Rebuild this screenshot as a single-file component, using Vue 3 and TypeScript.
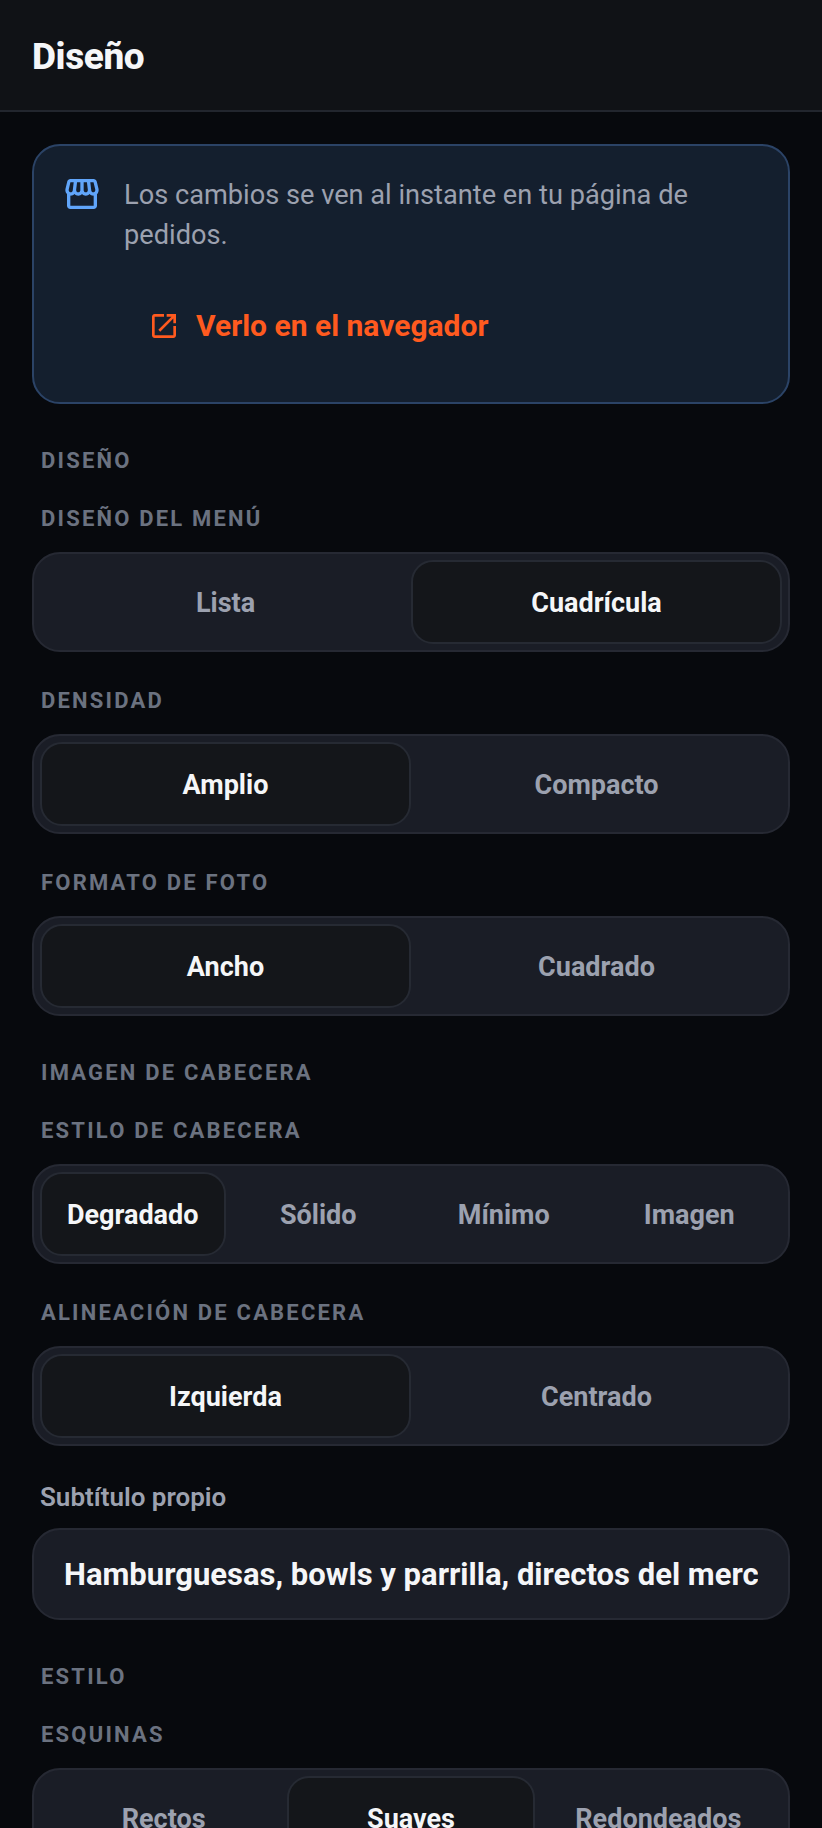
<script setup lang="ts">
interface Field {
  label: string
  options: string[]
  active: number
}
interface Section {
  title: string
  fields: Field[]
  subtitle?: string
}

const sections: Section[] = [
  {
    title: 'Diseño',
    fields: [
      { label: 'Diseño del menú', options: ['Lista', 'Cuadrícula'], active: 1 },
      { label: 'Densidad', options: ['Amplio', 'Compacto'], active: 0 },
      { label: 'Formato de foto', options: ['Ancho', 'Cuadrado'], active: 0 },
    ],
  },
  {
    title: 'Imagen de cabecera',
    fields: [
      { label: 'Estilo de cabecera', options: ['Degradado', 'Sólido', 'Mínimo', 'Imagen'], active: 0 },
      { label: 'Alineación de cabecera', options: ['Izquierda', 'Centrado'], active: 0 },
    ],
    subtitle: 'Hamburguesas, bowls y parrilla, directos del mercado',
  },
  {
    title: 'Estilo',
    fields: [{ label: 'Esquinas', options: ['Rectos', 'Suaves', 'Redondeados'], active: 1 }],
  },
]
</script>

<template>
  <div class="screen">
    <header class="topbar">
      <h1 class="title">Diseño</h1>
    </header>
    <main class="content">
      <div class="notice">
        <svg class="store" viewBox="0 0 24 24" fill="currentColor" aria-hidden="true">
          <path d="M21.9 8.89l-1.05-4.37c-.22-.9-1-1.52-1.91-1.52H5.05c-.9 0-1.69.63-1.9 1.52L2.1 8.89c-.24 1.02-.02 2.06.62 2.88.08.11.19.19.28.29V19c0 1.1.9 2 2 2h14c1.1 0 2-.9 2-2v-6.94c.09-.09.2-.18.28-.28.64-.82.87-1.87.62-2.89zm-2.99-3.9l1.05 4.37c.1.42.01.84-.25 1.17-.14.18-.44.47-.94.47-.61 0-1.14-.49-1.21-1.14L16.98 5l1.93-.01zM13 5h1.96l.54 4.52c.05.39-.07.78-.33 1.07-.22.26-.54.41-.95.41-.67 0-1.22-.59-1.22-1.31V5zM8.49 9.52L9.04 5H11v4.69c0 .72-.55 1.31-1.29 1.31-.34 0-.65-.15-.89-.41-.25-.29-.37-.68-.33-1.07zm-4.45-.16L5.05 5h1.97l-.58 4.86c-.08.65-.6 1.14-1.21 1.14-.49 0-.8-.29-.93-.47-.27-.32-.36-.75-.26-1.17zM5 19v-6.03c.08.01.15.03.23.03.87 0 1.66-.36 2.24-.95.6.6 1.4.95 2.31.95.87 0 1.65-.36 2.23-.93.59.57 1.39.93 2.29.93.84 0 1.64-.35 2.24-.95.58.59 1.37.95 2.24.95.08 0 .15-.02.23-.03V19H5z" />
        </svg>
        <div class="notice-body">
          <p class="notice-text">Los cambios se ven al instante en tu página de pedidos.</p>
          <a class="notice-link">
            <svg class="link-icon" viewBox="0 0 24 24" fill="currentColor" aria-hidden="true">
              <path d="M19 19H5V5h7V3H5c-1.11 0-2 .9-2 2v14c0 1.1.89 2 2 2h14c1.1 0 2-.9 2-2v-7h-2v7zM14 3v2h3.59l-9.83 9.83 1.41 1.41L19 6.41V10h2V3h-7z" />
            </svg>
            <span>Verlo en el navegador</span>
          </a>
        </div>
      </div>

      <section v-for="section in sections" :key="section.title" class="section">
        <h2 class="section-title">{{ section.title }}</h2>
        <div v-for="field in section.fields" :key="field.label" class="field">
          <div class="field-label">{{ field.label }}</div>
          <div class="segmented">
            <button
              v-for="(option, index) in field.options"
              :key="option"
              type="button"
              class="segment"
              :class="{ active: index === field.active }"
            >
              {{ option }}
            </button>
          </div>
        </div>
        <div v-if="section.subtitle" class="field field-text">
          <label class="text-label">Subtítulo propio</label>
          <input class="text-input" type="text" :value="section.subtitle" />
        </div>
      </section>
    </main>
  </div>
</template>

<style scoped>
.screen {
  height: 1828px;
  overflow: hidden;
  display: flex;
  flex-direction: column;
  background: #07090d;
  font-family: Roboto, "Noto Sans", sans-serif;
}
.topbar {
  flex: none;
  height: 112px;
  box-sizing: border-box;
  display: flex;
  align-items: center;
  padding: 0 32px 0;
  background: #101216;
  border-bottom: 2px solid #22262e;
}
.title {
  margin: 0;
  padding-top: 3px;
  font-size: 37px;
  font-weight: 800;
  letter-spacing: -0.4px;
  color: #f5f6f8;
}
.content {
  flex: 1;
  min-height: 0;
  overflow: hidden;
  padding: 32px 32px 0;
}
.notice {
  display: flex;
  gap: 22px;
  box-sizing: border-box;
  padding: 28px 28px 30px;
  background: #141f2e;
  border: 2px solid #2b4366;
  border-radius: 28px;
}
.store {
  flex: none;
  width: 40px;
  height: 40px;
  color: #60a5fa;
}
.notice-text {
  margin: 0;
  padding-top: 1px;
  font-size: 27.2px;
  line-height: 40px;
  color: #9ca1af;
}
.notice-link {
  display: flex;
  align-items: center;
  gap: 16px;
  height: 93px;
  margin-top: 24px;
  padding-left: 24px;
  font-size: 30px;
  font-weight: 700;
  color: #ff5a1f;
}
.link-icon {
  flex: none;
  width: 32px;
  height: 32px;
}
.section {
  margin-top: 42px;
}
.section-title,
.field-label {
  margin: 0;
  padding-left: 9px;
  font-size: 22px;
  line-height: 30px;
  font-weight: 700;
  letter-spacing: 2.2px;
  text-transform: uppercase;
  color: #6b7280;
}
.section-title {
  margin-bottom: 28px;
}
.field + .field {
  margin-top: 34px;
}
.field-label {
  margin-bottom: 18px;
}
.segmented {
  display: grid;
  grid-auto-flow: column;
  grid-auto-columns: 1fr;
  box-sizing: border-box;
  height: 100px;
  padding: 6px;
  background: #1a1d26;
  border: 2px solid #262933;
  border-radius: 28px;
}
.segment {
  margin: 0;
  padding: 2px 0 0;
  background: transparent;
  border: 2px solid transparent;
  border-radius: 22px;
  font-family: inherit;
  font-size: 27px;
  font-weight: 700;
  color: #9ca1af;
}
.segment.active {
  background: #14161a;
  border-color: #262a33;
  color: #f5f6f8;
}
.field + .field-text {
  margin-top: 35px;
}
.text-label {
  display: block;
  margin-bottom: 15px;
  padding-left: 8px;
  font-size: 26px;
  line-height: 32px;
  font-weight: 600;
  color: #9ca1af;
}
.text-input {
  display: block;
  width: 100%;
  box-sizing: border-box;
  height: 92px;
  padding: 0 30px;
  background: #1a1d26;
  border: 2px solid #262933;
  border-radius: 28px;
  outline: none;
  font-family: inherit;
  font-size: 31px;
  font-weight: 700;
  color: #f5f6f8;
}
</style>

<style>
html,
body {
  margin: 0;
  background: #07090d;
  overflow: hidden;
}
</style>
